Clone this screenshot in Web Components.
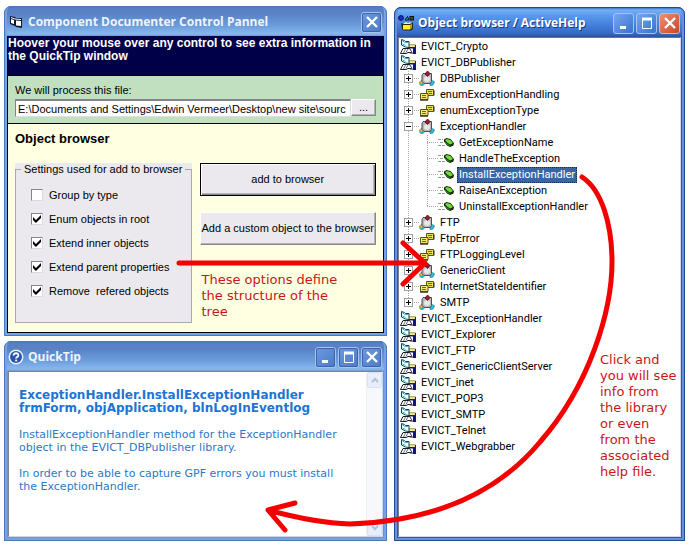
<!DOCTYPE html>
<html lang="en">
<head>
<meta charset="utf-8">
<title>Component Documenter</title>
<style>
  body { margin: 0; background: #fff; font: 11px/13px "Liberation Sans", Arial, sans-serif; color: #000; }
</style>
</head>
<body>
<help-desktop></help-desktop>

<script>
const define = (name, html, setup) => {
  const tpl = document.createElement('template');
  tpl.innerHTML = html;
  customElements.define(name, class extends HTMLElement {
    constructor() {
      super();
      this.attachShadow({ mode: 'open' }).append(tpl.content.cloneNode(true));
    }
    connectedCallback() { if (setup) setup(this, this.shadowRoot); }
  });
};

/* 16x16 glyphs used in title bars and in the tree */
const GLYPHS = {
  form: `<path d="M2 2l5 1 1 1h6v10l-6-1-1-1-5-2z" fill="#101830"/><path d="M3 5l3 1v4L3 9zM8 6.500l5 .5v5l-5-.5z" fill="#fff"/><path d="M3 3.500l4 1.500 6 .5" stroke="#fff" fill="none"/>`,
  help: `<circle cx="8" cy="8" r="7.500" fill="#e8f0fc"/><circle cx="8" cy="8" r="6" fill="#2a55a8"/><path d="M5.600 6.500C5.600 3.400 10.600 3.600 10.400 6.400 10.300 8 8.100 8 8.100 9.600" stroke="#fff" stroke-width="1.800" fill="none"/><rect x="7.200" y="10.600" width="1.900" height="1.800" fill="#fff"/>`,
  shapes: `<circle cx="3" cy="3" r="2.400" fill="#1830c8" stroke="#001058"/><path d="M7 5l2.500-3.500L11 5z" fill="#30a0a0" stroke="#001830"/><rect x="12" y="1.500" width="3.500" height="3.500" fill="#305030" stroke="#101010"/><path d="M3 8l3 1h7l2-2v7l-2 1.500H5L4 14z" fill="#302800"/><path d="M5 10h7v4.500H5z" fill="#fff020"/><path d="M5 9l3-2 2 1 3-1-1 2z" fill="#f8f090"/><path d="M12 10l2-1.500v4.500l-2 1.500z" fill="#c0a000"/>`,
  library: `<path d="M8 6h7.500v8H10z" fill="#fff" stroke="#202050"/><path d="M8 5.500h7v2H9z" fill="#e8d840"/><path d="M9 8h7v1.500H9zM13 9h3v6h-3z" fill="#101878"/><path d="M1.500.5l3 1 1 1h3.500v6L5.500 8l-4-2z" fill="#fff" stroke="#104048"/><path d="M2 1.500l3 2h3.500M2.500 5l3 1.500" stroke="#38b8c0" fill="none"/><path d="M3 9.500h6.500l2 3v1H8l-2 1H.5z" fill="#fff" stroke="#182028"/><path d="M5.500 10l-2 4M8 10l-2 3.500" stroke="#607880" fill="none"/>`,
  klass: `<path d="M.5 11l2.500-2 2 4-2 1H1z" fill="#e0b838" stroke="#706020" stroke-width=".6"/><path d="M1 13l3-1 2 1-2 2H2z" fill="#20b8d0"/><path d="M11 12l3-2.500 1.500 1.500-1.500 3-3 .5z" fill="#20c8e0" stroke="#106070" stroke-width=".6"/><path d="M3 4l1-1.500h8.500v8l-1.500 2H5l-2-2z" fill="#b8b4b8" stroke="#505058"/><circle cx="8" cy="8" r="3" fill="#e8e6e8"/><path d="M8.500 0l2.500 2.500-2.500 3-2.500-2.500z" fill="#98202c" stroke="#400810" stroke-width=".8"/>`,
  enum: `<path d="M7.500 2.500h7v6h-7z" fill="#e8e050" stroke="#585010"/><path d="M1.500 6.500h7.500v6H1.500z" fill="#f4ec68" stroke="#585010"/><path d="M9 4.500h4M10 6.500h3M3 8.500h4M3 10.500h4" stroke="#706818" fill="none"/><path d="M1 13.200h8M15 3.500v5" stroke="#302c10" fill="none"/>`,
  method: `<path d="M0 4.500h5M2 7.500h4M0 10.500h7" stroke="#989898" stroke-dasharray="3 1" fill="none"/><path d="M6 4.500L8.500 3l4 1 3.500 4-.5 2.500L12 12l-3-1.500-3-4z" fill="#102808"/><path d="M7 5l2-1 3.500 1 2.500 3-2.500 1.500L9.500 8z" fill="#70d838"/><path d="M7 6.500L9.500 9l2.500 1v1L9.500 10 7 7.500z" fill="#289020"/>`
};
const glyph = name => `<svg width="16" height="16" viewBox="0 0 16 16" aria-hidden="true" style="display:block;flex:none;overflow:visible">${GLYPHS[name]}</svg>`;

/* Window frame: heading + icon + caption buttons, content in the slot */
define('xp-window', `
<style>
  :host { display: flex; flex-direction: column; box-sizing: border-box; min-width: 0;
    border: 3px solid #76a3e2; border-top: 0; outline: 1px solid #4a78bc; outline-offset: -1px;
    border-radius: 7px 7px 0 0; background: #6494da; overflow: hidden; }
  header { display: flex; align-items: center; gap: 4px; box-sizing: border-box; height: 30px; flex: none;
    margin: 0 -3px; padding: 2px 5px 0 4px;
    background: linear-gradient(#4a74b8 0, #5a80c4 3px, #5882c6 8px, #6c9edc 20px, #88b8ee 28px, #7098d0 30px); }
  h1 { flex: 1; margin: 0; font: bold 12px/18px "Open Sans", "Noto Sans", sans-serif; color: #eef4fe; white-space: nowrap; }
  .caps { display: flex; gap: 2px; }
  button { display: grid; place-items: center; width: 21px; height: 21px; padding: 0; box-sizing: border-box;
    border: 1px solid #a8c4ee; border-radius: 3px; background: linear-gradient(135deg, #6c98dc, #4c7cc8); outline: 1px solid #3a64ac; outline-offset: -2px; }
  main { flex: 1; display: flex; flex-direction: column; min-width: 0; }
  main ::slotted(*) { min-width: 0; }
  :host([active]) { border-color: #6890dc; outline-color: #1c4a9c; background: #2c5cb0; }
  :host([active]) header { background: linear-gradient(#2458ac 0, #74b0f4 3px, #5898ec 9px, #4480dc 18px, #3468c0 27px, #2c50a0 30px); }
  :host([active]) h1 { color: #fff; text-shadow: 1px 1px #16387c; }
  :host([active]) button { background: linear-gradient(135deg, #74a8f0, #3c70cc); outline: 0; }
  :host([active]) .close { background: linear-gradient(135deg, #f09078, #cc4420); }
</style>
<header><span class="icon"></span><h1></h1><div class="caps"></div></header>
<main><slot></slot></main>`, (el, root) => {
  root.querySelector('.icon').innerHTML = glyph(el.getAttribute('icon'));
  root.querySelector('h1').textContent = el.getAttribute('heading');
  const marks = {
    minimize: '<path d="M4 12.500h6" stroke="#fff" stroke-width="3"/>',
    maximize: '<path d="M3.500 3v10.500h9V3" fill="none" stroke="#fff"/><path d="M3 4h10" stroke="#fff" stroke-width="3"/>',
    close: '<path d="M3 3l10 10M13 3L3 13" stroke="#fff" stroke-width="2.400"/>'
  };
  root.querySelector('.caps').innerHTML = el.getAttribute('caps').split(' ').map(c =>
    `<button class="${c}" aria-label="${c}"><svg width="16" height="16" viewBox="0 0 16 16">${marks[c]}</svg></button>`).join('');
});

define('push-button', `
<style>
  :host { display: grid; }
  button { font: inherit; color: inherit; white-space: nowrap; padding: 0; background: #ebe9ed; box-sizing: border-box; border: 1px solid;
    border-color: #fff #87858c #87858c #fff; box-shadow: inset -1px -1px #b4b2ba; }
  :host([default]) button { border-color: #000; box-shadow: inset 1px 1px #fff, inset -1px -1px #87858c, inset -2px -2px #b4b2ba; }
</style>
<button><slot></slot></button>`);

define('check-option', `
<style>
  label { display: flex; align-items: center; gap: 6px; height: 24px; }
  input { appearance: none; margin: 0; width: 12px; height: 12px; box-sizing: border-box; background: #fff;
    border: 1px solid; border-color: #85838a #dcdae0 #dcdae0 #85838a; display: grid; place-items: center; }
  input:checked::before { content: ""; width: 8px; height: 8px; background: #000;
    clip-path: polygon(0 25%, 37% 62%, 100% 0, 100% 38%, 37% 100%, 0 62%); }
  :host { display: block; }
</style>
<label><input type="checkbox"><slot></slot></label>`, (el, root) => {
  root.querySelector('input').checked = el.hasAttribute('checked');
});

define('control-panel', `
<style>
  :host { display: block; border: solid #000; border-width: 0 1px 1px; }
  .tip { background: #000048; color: #fff; font-weight: bold; font-size: 12px; white-space: nowrap;
    padding: 1px 0 12px; border-bottom: 1px solid #000; }
  .file { background: #c0e0c0; padding: 8px 7px 6px; border-bottom: 1px solid #000; }
  .file label { display: block; margin-bottom: 2px; }
  .row { display: flex; align-items: start; }
  input { flex: 1; min-width: 0; height: 18px; box-sizing: border-box; font: inherit; background: #fff; padding: 0 2px;
    border: 1px solid; border-color: #85838a #e0dee4 #e0dee4 #85838a; border-top-width: 2px; border-radius: 0; }
  .row push-button { width: 25px; height: 17px; }
  .browse { background: #ffffe1; padding: 7px 7px 9px; }
  h2 { margin: 0; font-size: 13px; line-height: 15px; }
  .cols { display: grid; grid-template-columns: 1fr 1fr; gap: 8px; margin-top: 17px; }
  .box { background: #ebe9ed; }
  fieldset { margin: 0; border: 1px solid #a9a7b8; padding: 7px 0 19px 15px; min-width: 0; }
  legend { padding: 0 3px; margin-left: -10px; white-space: nowrap; }
  .actions { display: flex; flex-direction: column; }
  .actions push-button { height: 33px; }
  .actions push-button + push-button { margin-top: 16px; }
  .actions red-note { margin: 27px 20px 0 2px; }
</style>
<div class="tip">Hoover your mouse over any control to see extra information in<br>the QuickTip window</div>
<div class="file">
  <label for="path">We will process this file:</label>
  <div class="row"><input id="path" type="text" value="E:\\Documents and Settings\\Edwin Vermeer\\Desktop\\new site\\sourc"><push-button>...</push-button></div>
</div>
<div class="browse">
  <h2>Object browser</h2>
  <div class="cols">
    <div class="box"><fieldset>
      <legend>Settings used for add to browser</legend>
      <check-option>Group by type</check-option>
      <check-option checked>Enum objects in root</check-option>
      <check-option checked>Extend inner objects</check-option>
      <check-option checked>Extend parent properties</check-option>
      <check-option checked>Remove&nbsp; refered objects</check-option>
    </fieldset></div>
    <div class="actions">
      <push-button default>add to browser</push-button>
      <push-button>Add a custom object to the browser</push-button>
      <red-note>These options define<br>the structure of the<br>tree</red-note>
    </div>
  </div>
</div>`);

define('red-note', `
<style>:host { display: block; color: #cc1420; font: 13px/16px "DejaVu Sans", Verdana, sans-serif; white-space: nowrap; }</style>
<slot></slot>`);

define('quick-tip', `
<style>
  :host { flex: 1; display: flex; background: #fff; margin: 0 1px 1px; border: 1px solid; border-color: #7c8494 #c8daf0 #c8daf0 #7c8494; }
  article { flex: 1; padding: 17px 10px; font: 11px/13px "DejaVu Sans", Verdana, sans-serif; color: #2a78c8; white-space: nowrap; }
  p { margin: 0 0 13px; }
  .sig { font-weight: bold; font-size: 12px; color: #1c74d4; }
  .bar { width: 15px; display: flex; flex-direction: column; justify-content: space-between; background: #f7f8fc; border-left: 1px solid #ecf0f8; }
  button { height: 16px; padding: 0; border: 1px solid #d8e2f4; border-radius: 2px; background: #e8effb; display: grid; place-items: center; }
</style>
<article>
  <p class="sig">ExceptionHandler.InstallExceptionHandler<br>frmForm, objApplication, blnLogInEventlog</p>
  <p>InstallExceptionHandler method for the ExceptionHandler<br>object in the EVICT_DBPublisher library.</p>
  <p>In order to be able to capture GPF errors you must install<br>the ExceptionHandler.</p>
</article>
<div class="bar">
  <button aria-label="Scroll up" disabled><svg width="8" height="6"><path d="M1 5l3-3 3 3" fill="none" stroke="#b0c0dc" stroke-width="2"/></svg></button>
  <button aria-label="Scroll down" disabled><svg width="8" height="6"><path d="M1 1l3 3 3-3" fill="none" stroke="#b0c0dc" stroke-width="2"/></svg></button>
</div>`);

/* One tree row. guides: one letter per 19px cell - "t" branch, "l" last branch, "i" line through */
define('tree-row', `
<style>
  :host { display: flex; height: 16px; align-items: center; white-space: nowrap; }
  .cell { position: relative; width: 19px; height: 16px; flex: none; }
  .cell svg { display: block; }
  button { position: absolute; left: 4px; top: 3px; width: 9px; height: 9px; padding: 0; border: 1px solid #a0a0a8; background: #fff; border-radius: 0; }
  button svg { width: 7px; height: 7px; }
  .label { margin-left: 3px; padding: 0 2px; line-height: 16px; }
  :host([selected]) .label { background: #3864a8; color: #fff; outline: 1px dotted #182c50; outline-offset: -1px; }
</style>
<span class="guides" style="display:flex"></span><span class="icon"></span><span class="label"><slot></slot></span>`, (el, root) => {
  const fold = el.getAttribute('fold');
  const guides = el.getAttribute('guides') || '';
  root.querySelector('.guides').innerHTML = [...guides].map((g, i) => {
    const down = g === 'l' ? 8 : 16;
    const across = g === 'i' ? '' : 'M8 7.500h11';
    const box = fold && i === guides.length - 1
      ? `<button aria-label="${fold}"><svg viewBox="0 0 7 7"><path d="M1 3.500h5${fold === 'Expand' ? 'M3.500 1v5' : ''}" stroke="#000"/></svg></button>` : '';
    return `<span class="cell"><svg width="19" height="16"><path d="M8.500 0v${down}${across}" stroke="#a8a8a8" stroke-dasharray="1 1" fill="none"/></svg>${box}</span>`;
  }).join('');
  root.querySelector('.icon').innerHTML = glyph(el.getAttribute('icon'));
});

define('object-tree', `
<style>:host { flex: 1; display: block; font-family: Roboto, "Liberation Sans", sans-serif; background: #fff; margin: 0 1px 1px; border: 1px solid; border-color: #6c7484 #c8daf0 #c8daf0 #7c8494; padding: 1px; }</style>
<div role="tree"></div>`, (el, root) => {
  const rows = [
    ['library', '', '', 'EVICT_Crypto'],
    ['library', '', '', 'EVICT_DBPublisher'],
    ['klass', 't', 'Expand', 'DBPublisher'],
    ['enum', 't', 'Expand', 'enumExceptionHandling'],
    ['enum', 't', 'Expand', 'enumExceptionType'],
    ['klass', 't', 'Collapse', 'ExceptionHandler'],
    ['method', 'it', '', 'GetExceptionName'],
    ['method', 'it', '', 'HandleTheException'],
    ['method', 'it', '', 'InstallExceptionHandler', 'selected'],
    ['method', 'it', '', 'RaiseAnException'],
    ['method', 'il', '', 'UninstallExceptionHandler'],
    ['klass', 't', 'Expand', 'FTP'],
    ['enum', 't', 'Expand', 'FtpError'],
    ['enum', 't', 'Expand', 'FTPLoggingLevel'],
    ['klass', 't', 'Expand', 'GenericClient'],
    ['enum', 't', 'Expand', 'InternetStateIdentifier'],
    ['klass', 'l', 'Expand', 'SMTP'],
    ...['ExceptionHandler', 'Explorer', 'FTP', 'GenericClientServer', 'inet', 'POP3', 'SMTP', 'Telnet', 'Webgrabber']
      .map(n => ['library', '', '', 'EVICT_' + n])
  ];
  root.querySelector('div').innerHTML = rows.map(([icon, guides, fold, text, sel]) =>
    `<tree-row role="treeitem" icon="${icon}" guides="${guides}" fold="${fold}" ${sel || ''}>${text}</tree-row>`).join('');
});

define('help-desktop', `
<style>
  :host { position: relative; display: grid; grid-template-columns: minmax(0, 383fr) minmax(0, 291fr); gap: 7px;
    box-sizing: border-box; min-height: 100vh; padding: 6px 4px 8px; }
  .left { display: flex; flex-direction: column; gap: 5px; }
  .tip { flex: 1; }
  .tree { margin-top: 1px; }
  .arrows { position: absolute; inset: 0; width: 100%; height: 100%; pointer-events: none; }
  .aside { position: absolute; left: 600px; top: 352px; }
</style>
<div class="left">
  <xp-window heading="Component Documenter Control Pannel" icon="form" caps="close"><control-panel></control-panel></xp-window>
  <xp-window class="tip" heading="QuickTip" icon="help" caps="minimize maximize close"><quick-tip></quick-tip></xp-window>
</div>
<xp-window class="tree" active heading="Object browser / ActiveHelp" icon="shapes" caps="minimize maximize close"><object-tree></object-tree></xp-window>
<red-note class="aside">Click and<br>you will see<br>info from<br>the library<br>or even<br>from the<br>associated<br>help file.</red-note>
<svg class="arrows" viewBox="0 0 689 549" preserveAspectRatio="none" aria-hidden="true">
  <g fill="none" stroke="#f40000" stroke-width="5" stroke-linecap="round" stroke-linejoin="round">
    <path d="M179 263H425M403 243L425 263L403 284"/>
    <path d="M582 177C602 190 612 225 612 262C612 310 590 385 540 442C500 490 440 521 350 524C320 523 290 516 268 510M295 503L268 510L285 530"/>
  </g>
</svg>`);
</script>
</body>
</html>
